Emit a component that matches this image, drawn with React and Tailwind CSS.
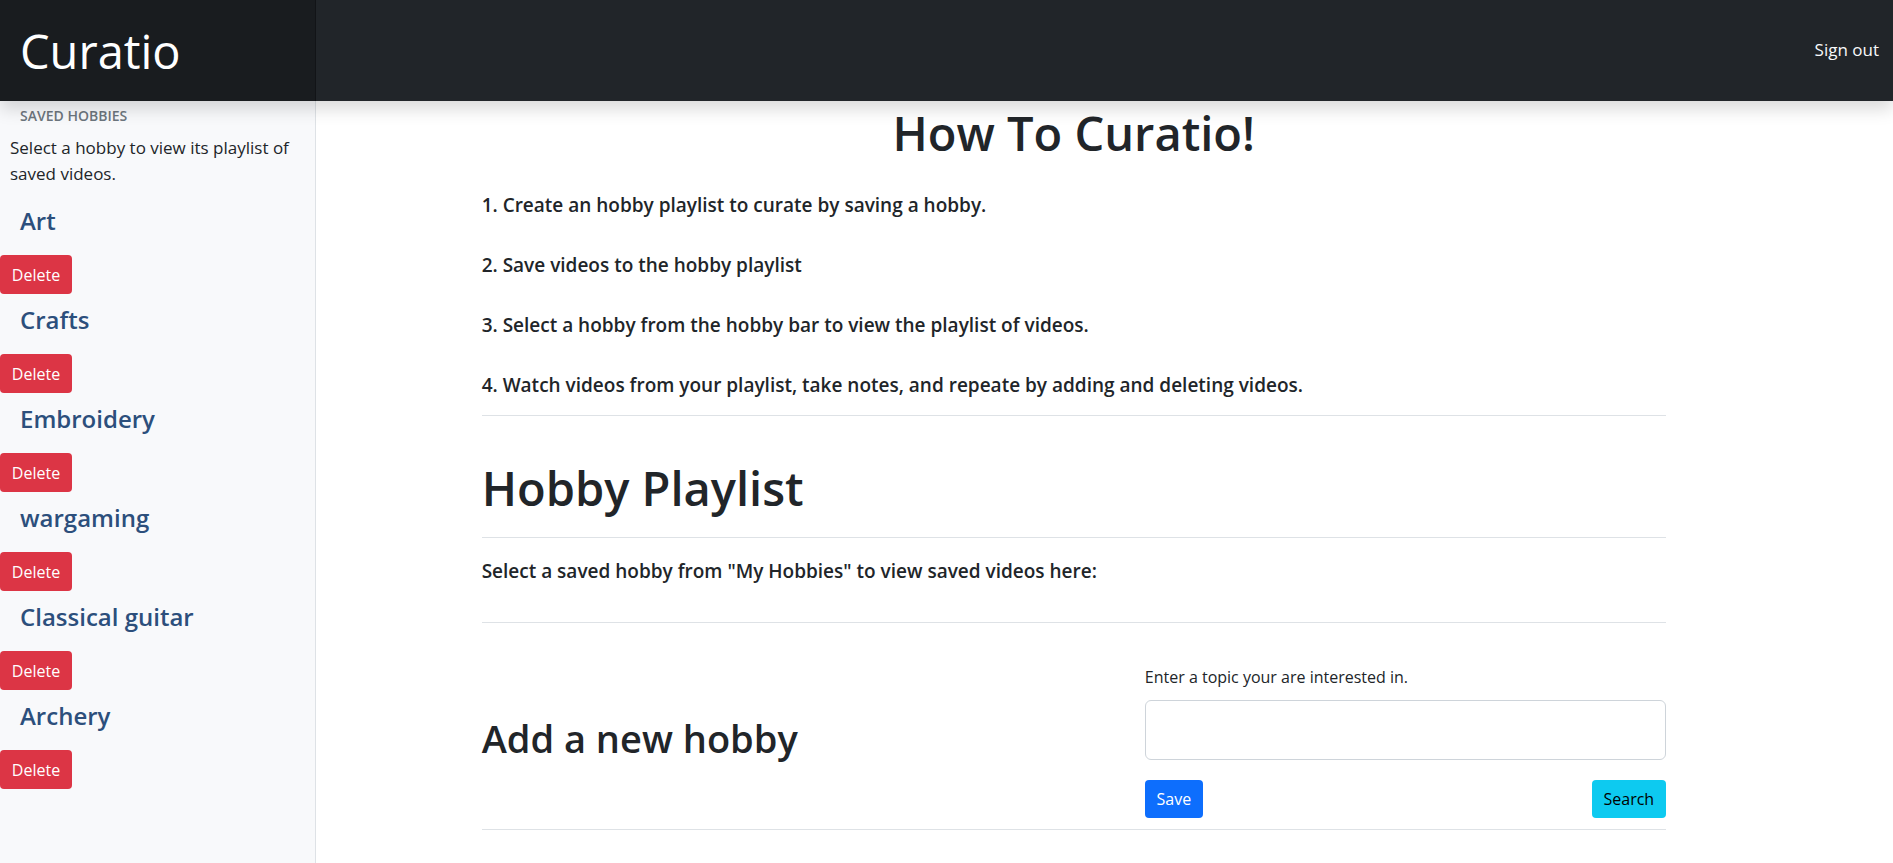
const hobbies = ["Art", "Crafts", "Embroidery", "wargaming", "Classical guitar", "Archery"];

const steps = [
  "1. Create an hobby playlist to curate by saving a hobby.",
  "2. Save videos to the hobby playlist",
  "3. Select a hobby from the hobby bar to view the playlist of videos.",
  "4. Watch videos from your playlist, take notes, and repeate by adding and deleting videos.",
];

function Header() {
  return (
    <header className="relative z-10 flex h-[101px] items-center justify-between bg-[#212529] shadow-[0_8px_16px_rgba(0,0,0,0.15)]">
      <a
        href="#home"
        className="flex h-full w-[316px] items-center border-r border-[#121417] bg-[#191c1f] pl-5 text-[47px] leading-[60px] font-normal text-white"
      >
        Curatio
      </a>
      <a href="#signout" className="pr-[14px] pb-[2px] text-[17px] leading-6 text-[#f8f9fa]">
        Sign out
      </a>
    </header>
  );
}

function Sidebar() {
  return (
    <nav aria-label="Saved hobbies" className="w-[316px] border-r border-[#dee2e6] bg-[#f8f9fb] pt-[5px]">
      <h6 className="pl-5 text-[14px] leading-5 font-semibold text-[#6c757d] uppercase">Saved Hobbies</h6>
      <p className="mt-[9px] px-[10px] text-[17px] leading-[26px]">
        Select a hobby to view its playlist of saved videos.
      </p>
      <ul className="mt-2">
        {hobbies.map((hobby) => (
          <li key={hobby}>
            <a href="#hobby" className="block h-[60px] pt-[10px] pl-5 text-[24px] leading-8 font-semibold text-[#2c4f7c]">
              {hobby}
            </a>
            <button
              type="button"
              aria-label={"Delete " + hobby}
              className="block h-[39px] w-[72px] rounded bg-[#dc3545] text-[16px] text-white"
            >
              Delete
            </button>
          </li>
        ))}
      </ul>
    </nav>
  );
}

export default function App() {
  return (
    <div className="flex min-h-screen flex-col bg-white font-['Open_Sans','Noto_Sans',sans-serif] text-[#212529]">
      <Header />
      <div className="flex grow">
        <Sidebar />
        <main className="flex-1 pr-[12%] pl-[8.75%]">
          <h1 className="pt-[2px] text-center text-[47px] leading-[60px] font-semibold">How To Curatio!</h1>
          <ol className="mt-3 border-b border-[#dee2e6] text-[19px] leading-[60px] font-semibold">
            {steps.map((step) => (
              <li key={step}>{step}</li>
            ))}
          </ol>

          <h2 className="border-b border-[#dee2e6] pt-[42px] pb-[19px] text-[47px] leading-[60px] font-semibold">
            Hobby Playlist
          </h2>
          <p className="border-b border-[#dee2e6] pt-[21px] pb-[39px] text-[19px] leading-6 font-semibold">
            Select a saved hobby from "My Hobbies" to view saved videos here:
          </p>

          <form className="flex items-center justify-between border-b border-[#dee2e6] pt-[41px] pb-[11px]">
            <h3 className="pb-[6px] text-[38px] leading-[48px] font-semibold">Add a new hobby</h3>
            <div className="w-[44%]">
              <label htmlFor="topic" className="block text-[16px] leading-[26px]">
                Enter a topic your are interested in.
              </label>
              <textarea
                id="topic"
                className="mt-[10px] block h-[60px] w-full resize-none rounded-md border border-[#ced4da] bg-white px-3 py-2 text-[16px]"
              />
              <div className="mt-5 flex justify-between">
                <button type="button" className="h-[38px] w-[58px] rounded bg-[#0d6efd] text-[16px] text-white">
                  Save
                </button>
                <button type="button" className="h-[38px] w-[74px] rounded bg-[#0dcaf0] text-[16px] text-black">
                  Search
                </button>
              </div>
            </div>
          </form>
        </main>
      </div>
    </div>
  );
}
